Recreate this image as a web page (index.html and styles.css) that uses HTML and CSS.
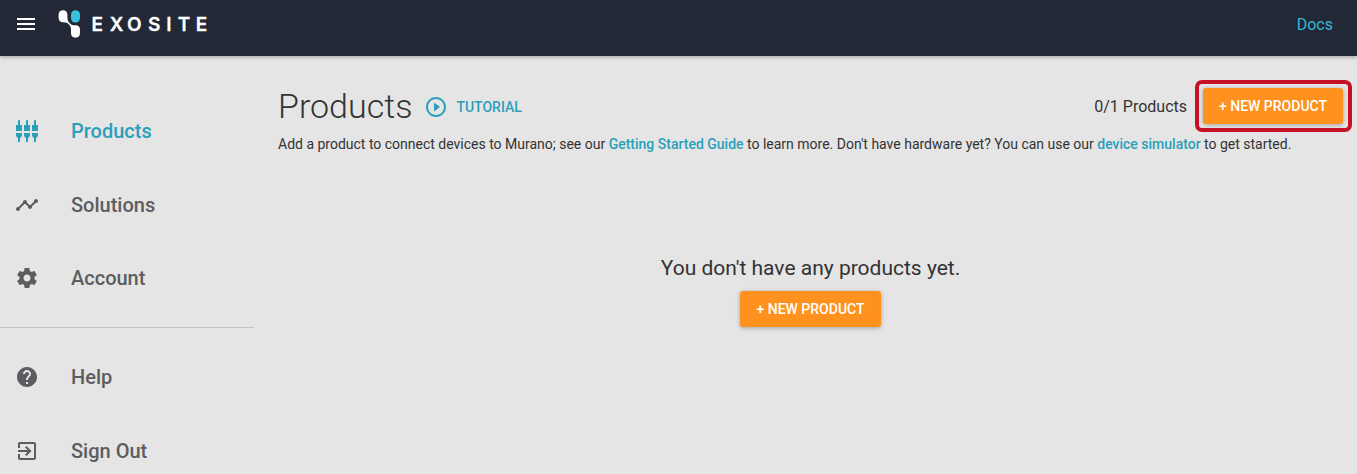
FILE: index.html
```html
<!DOCTYPE html>
<html lang="en">
<head>
<meta charset="utf-8">
<title>Products</title>
<link rel="stylesheet" href="styles.css">
</head>
<body>
<header class="topbar">
  <svg class="menu" viewBox="0 0 18 12"><path d="M0 0h18v2H0zM0 5h18v2H0zM0 10h18v2H0z"/></svg>
  <svg class="logo" viewBox="0 0 152 28">
    <path class="mark" d="M5 0.200C7.800 0.200 9.400 2 9.400 4.500V7.500C9.400 10.300 10.400 11.900 12 13.500C13.600 15 14.700 15.300 17.600 15.300C20.500 15.400 22 17 22 19.500V23C22 25.800 20.400 27.700 17.500 27.700S13 25.800 13 23V20C13 17.500 12.500 16 11 14.500C9.500 13 8.300 12.400 5 12.300C2.200 12.200 0.600 10.300 0.600 7.500V4.500C0.600 2 2.200 0.200 5 0.200Z"/>
    <rect class="accent" x="13" y="0.200" width="9" height="12.200" rx="4.300"/>
    <text class="wordmark" y="20.600" x="33.500 51.800 69 89.900 108.300 119.800 137.800">EXOSITE</text>
  </svg>
  <a class="docs">Docs</a>
</header>
<div class="layout">
  <nav class="sidebar">
    <a class="item active"><svg class="icon" viewBox="0 0 24 24"><path d="M5 2c0-.55-.45-1-1-1s-1 .45-1 1v4H1v6h6V6H5V2zm4 14c0 1.300.840 2.400 2 2.820V23h2v-4.180c1.160-.410 2-1.510 2-2.820v-2H9v2zm-8 0c0 1.300.840 2.400 2 2.820V23h2v-4.180C6.160 18.400 7 17.300 7 16v-2H1v2zM21 6V2c0-.55-.45-1-1-1s-1 .45-1 1v4h-2v6h6V6h-2zm-8-4c0-.55-.45-1-1-1s-1 .45-1 1v4H9v6h6V6h-2V2zm4 14c0 1.300.840 2.400 2 2.820V23h2v-4.180c1.160-.410 2-1.510 2-2.820v-2h-6v2z"/></svg><span>Products</span></a>
    <a class="item"><svg class="icon" viewBox="0 0 24 24"><path d="M23 8c0 1.100-.9 2-2 2-.180 0-.350-.020-.510-.070l-3.560 3.550c.050.160.070.340.070.520 0 1.100-.9 2-2 2s-2-.9-2-2c0-.180.020-.360.070-.520l-2.550-2.550c-.160.050-.340.070-.520.070s-.360-.020-.520-.070l-4.550 4.560c.050.160.070.330.070.510 0 1.100-.9 2-2 2s-2-.9-2-2 .9-2 2-2c.180 0 .350.020.510.070l4.560-4.550C8.020 9.360 8 9.180 8 9c0-1.100.9-2 2-2s2 .9 2 2c0 .180-.020.360-.070.520l2.550 2.550c.160-.050.340-.070.520-.070s.360.020.520.070l3.550-3.560C19.020 8.350 19 8.180 19 8c0-1.100.9-2 2-2s2 .9 2 2z"/></svg><span>Solutions</span></a>
    <a class="item"><svg class="icon" viewBox="0 0 24 24"><path d="M19.430 12.980c.040-.320.070-.640.070-.980s-.030-.660-.070-.980l2.110-1.650c.190-.150.240-.420.120-.640l-2-3.460c-.120-.220-.390-.3-.610-.220l-2.490 1c-.520-.4-1.080-.730-1.690-.980l-.380-2.650C14.460 2.180 14.250 2 14 2h-4c-.250 0-.460.180-.490.420l-.380 2.650c-.610.250-1.170.590-1.690.980l-2.490-1c-.230-.090-.490 0-.610.220l-2 3.460c-.130.220-.070.490.120.640l2.110 1.650c-.040.320-.070.650-.070.980s.030.660.070.980l-2.110 1.650c-.190.150-.240.420-.120.640l2 3.460c.120.220.390.3.610.220l2.490-1c.520.4 1.080.730 1.690.980l.380 2.650c.030.240.240.420.490.420h4c.250 0 .460-.180.490-.420l.380-2.650c.610-.250 1.170-.590 1.690-.980l2.490 1c.230.090.490 0 .610-.220l2-3.460c.120-.220.070-.490-.120-.640l-2.110-1.650zM12 15.500c-1.930 0-3.500-1.570-3.500-3.500s1.570-3.500 3.500-3.500 3.500 1.570 3.500 3.500-1.570 3.500-3.500 3.500z"/></svg><span>Account</span></a>
    <div class="divider"></div>
    <a class="item"><svg class="icon" viewBox="0 0 24 24"><path d="M12 2C6.480 2 2 6.480 2 12s4.480 10 10 10 10-4.480 10-10S17.520 2 12 2zm1 17h-2v-2h2v2zm2.070-7.750l-.9.920C13.450 12.900 13 13.500 13 15h-2v-.5c0-1.100.450-2.100 1.170-2.830l1.240-1.260c.370-.360.590-.860.590-1.410 0-1.100-.9-2-2-2s-2 .9-2 2H8c0-2.210 1.790-4 4-4s4 1.790 4 4c0 .880-.360 1.680-.930 2.250z"/></svg><span>Help</span></a>
    <a class="item"><svg class="icon" viewBox="0 0 24 24"><path d="M10.090 15.590L11.500 17l5-5-5-5-1.410 1.410L12.670 11H3v2h9.670l-2.580 2.590zM19 3H5c-1.110 0-2 .9-2 2v4h2V5h14v14H5v-4H3v4c0 1.100.890 2 2 2h14c1.100 0 2-.9 2-2V5c0-1.100-.9-2-2-2z"/></svg><span>Sign Out</span></a>
  </nav>
  <main class="content">
    <div class="heading">
      <h1 class="title">Products</h1>
      <a class="tutorial"><svg class="icon" viewBox="0 0 24 24"><path d="M10 16.500l6-4.500-6-4.500v9zM12 2C6.480 2 2 6.480 2 12s4.480 10 10 10 10-4.480 10-10S17.520 2 12 2zm0 18c-4.410 0-8-3.590-8-8s3.590-8 8-8 8 3.590 8 8-3.590 8-8 8z"/></svg><span>TUTORIAL</span></a>
      <span class="count">0/1 Products</span>
      <div class="highlight"><button class="button">+ NEW PRODUCT</button></div>
    </div>
    <p class="intro">Add a product to connect devices to Murano; see our <a class="link">Getting Started Guide</a> to learn more. Don't have hardware yet? You can use our <a class="link">device simulator</a> to get started.</p>
    <section class="empty">
      <p class="message">You don't have any products yet.</p>
      <button class="button">+ NEW PRODUCT</button>
    </section>
  </main>
</div>
</body>
</html>
```
FILE: styles.css
```css
* { box-sizing: border-box; }
body {
  margin: 0;
  height: 474px;
  overflow: hidden;
  background: #e5e5e5;
  color: #333;
  font-family: Roboto, "Liberation Sans", sans-serif;
}
.topbar {
  position: relative;
  display: flex;
  align-items: flex-start;
  height: 56px;
  padding-right: 24px;
  background: #222835;
  box-shadow: 0 1px 4px rgba(0, 0, 0, .3);
}
.menu { width: 18px; height: 12px; margin: 18px 0 0 17px; fill: #fff; }
.logo { width: 152px; height: 28px; margin: 10px 0 0 23px; overflow: visible; }
.mark { fill: #fff; }
.accent { fill: #35c1df; }
.wordmark { fill: #fff; stroke: #fff; stroke-width: .3px; font: 600 19px Inter, sans-serif; }
.docs { margin: 15px 0 0 auto; color: #35b8d4; font-size: 16px; line-height: 20px; }
.layout { display: flex; height: 418px; }
.sidebar { width: 254px; padding-top: 38.400px; flex: none; }
.item {
  display: flex;
  align-items: center;
  gap: 32px;
  height: 73.600px;
  padding-left: 15px;
  color: #5c5d60;
  font-size: 20px;
  font-weight: 500;
}
.icon { width: 24px; height: 24px; fill: currentColor; flex: none; }
.active { color: #2b9fba; }
.divider { height: 1px; margin: 12px 0 12.200px; background: #c3c3c3; }
.content { flex: 1; padding: 24px 5px 0 24px; }
.heading { display: flex; align-items: center; height: 52px; }
.title { margin: 0; font-size: 34px; font-weight: 300; line-height: 40px; }
.tutorial {
  display: flex;
  align-items: center;
  gap: 8px;
  margin: 2px 0 0 12px;
  color: #2b9fba;
  font-size: 14px;
  font-weight: 500;
}
.count { margin: 0 8px 0 auto; font-size: 16px; }
.highlight {
  width: 157px;
  height: 52px;
  padding: 4px;
  border: 4px solid #c51026;
  border-radius: 7px;
}
.button {
  display: block;
  width: 141px;
  height: 36px;
  padding: 0;
  border: 0;
  border-radius: 3px;
  background: #ff921e;
  box-shadow: 0 1px 4px rgba(0, 0, 0, .3);
  color: #fff;
  font: 500 14px Roboto, sans-serif;
}
.highlight .button { width: 140px; }
.intro { margin: 2px 0 0; font-size: 14px; line-height: 20px; letter-spacing: -.003px; white-space: nowrap; }
.link { color: #2b9fba; font-weight: 500; }
.empty {
  display: flex;
  flex-direction: column;
  align-items: center;
  gap: 10px;
  padding: 101px 9px 0 0;
}
.message { margin: 0; font-size: 21px; line-height: 26px; }
```
